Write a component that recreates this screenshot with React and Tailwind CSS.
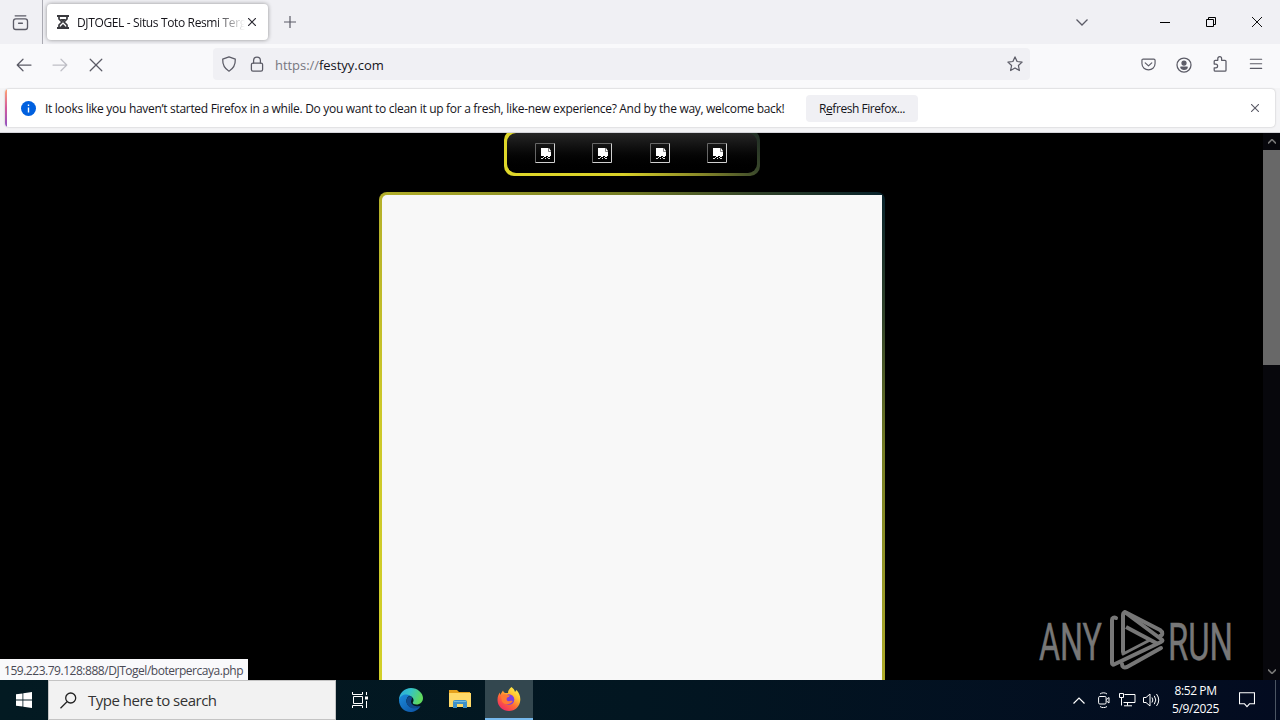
import React from 'react';

const uiFont = 'font-["Open_Sans","Noto_Sans",sans-serif]';

function Icon({ size = 16, children, className = '', width = 1.25 }) {
  return (
    <svg
      width={size}
      height={size}
      viewBox="0 0 16 16"
      fill="none"
      stroke="currentColor"
      strokeWidth={width}
      strokeLinecap="round"
      strokeLinejoin="round"
      className={`block shrink-0 ${className}`}
    >
      {children}
    </svg>
  );
}

function TabStrip() {
  return (
    <div className="flex h-11 bg-[#f0f0f4] text-[#5b5b66]">
      <div className="flex w-[43px] items-center justify-center border-r border-[#aaaab2] pr-[2px]">
        <Icon size={17}>
          <rect x="1.4" y="4.6" width="13.2" height="10" rx="2.2" />
          <path d="M3 1.7h10M6.2 8.7h3.6" />
        </Icon>
      </div>
      <div className="mt-1 ml-[4px] flex h-9 w-[221px] items-center rounded bg-white shadow-[0_0_4px_rgba(0,0,0,0.4)]">
        <svg width="12" height="14" viewBox="0 0 12 14" className="ml-[10px] shrink-0">
          <path d="M0 0h12v2H0zM0 12h12v2H0z" fill="#38383d" />
          <path d="M2 2v2l3 3-3 3v2M10 2v2L7 7l3 3v2" fill="none" stroke="#38383d" strokeWidth="1.7" />
          <path d="M3 4h6L6 7zM3 12l3-3 3 3z" fill="#38383d" />
        </svg>
        <div className="mt-px ml-[8px] w-[168px] shrink-0 overflow-hidden whitespace-nowrap text-[12px] tracking-[-0.36px] text-[#15141a] [mask-image:linear-gradient(to_right,black_82%,transparent)]">
          DJTOGEL - Situs Toto Resmi Terg
        </div>
        <svg width="8" height="8" viewBox="0 0 8 8" className="ml-[3px] shrink-0" stroke="#2b2a33" strokeWidth="1.2">
          <path d="M0 0l8 8M8 0L0 8" />
        </svg>
      </div>
      <svg width="12" height="12" viewBox="0 0 12 12" className="mt-[16px] ml-[16px]" stroke="#5b5b66" strokeWidth="1.2">
        <path d="M6 0v12M0 6h12" />
      </svg>
      <div className="ml-auto flex items-center">
        <svg width="12" height="7" viewBox="0 0 12 7" className="mr-[72px]" fill="none" stroke="#5b5b66" strokeWidth="1.3">
          <path d="M.5.5L6 6 11.5.5" />
        </svg>
        <div className="mr-[36px] h-px w-[10px] bg-black" />
        <svg width="10" height="10" viewBox="0 0 10 10" className="mr-[36px]" fill="none" stroke="#000">
          <path d="M.5 2.5h7v7h-7zM2.5 2.5v-2h7v7h-2" />
        </svg>
        <svg width="10" height="10" viewBox="0 0 10 10" className="mr-[18px]" stroke="#111" strokeWidth="1">
          <path d="M0 0l10 10M10 0L0 10" />
        </svg>
      </div>
    </div>
  );
}

function NavBar() {
  return (
    <div className="flex h-11 items-center bg-[#f9f9fb] pb-[2px] text-[#5b5b66]">
      <Icon className="ml-[16px]">
        <path d="M15 8H1.4M7 2.2L1.2 8 7 13.8" />
      </Icon>
      <Icon className="ml-[20px] text-[#bfbfc6]">
        <path d="M1 8h13.6M9 2.2L14.8 8 9 13.8" />
      </Icon>
      <Icon className="ml-[20px]">
        <path d="M2.2 2.2l11.6 11.6M13.8 2.2L2.2 13.8" />
      </Icon>
      <div className="mb-[2px] ml-[109px] flex h-8 w-[817px] items-center rounded-sm bg-[#f0f0f4]">
        <Icon className="ml-[8px]">
          <path d="M8 .8l6.3 2.3c.2 5.2-1.2 9.2-6.3 12.1C2.9 12.3 1.5 8.3 1.7 3.1z" />
        </Icon>
        <Icon className="ml-[12px]">
          <rect x="2.4" y="7" width="11.2" height="8" rx="1.6" />
          <path d="M4.6 7V4.400a3.400 3.400 0 0 1 6.800 0V7" />
        </Icon>
        <div className="mt-[2px] ml-[10px] text-[13px] leading-4 tracking-[-0.04px] whitespace-nowrap text-[#77777f]">
          https://<span className="text-[#15141a]">festyy.com</span>
        </div>
        <Icon className="mr-[7px] ml-auto">
          <path d="M8 .9l2.100 4.600 5 .6-3.700 3.400 1 5L8 12l-4.400 2.500 1-5L.9 6.100l5-.6z" />
        </Icon>
      </div>
      <Icon size={15} className="mb-[2px] ml-[111px]">
        <path d="M2.300 2.200h11.400a1.300 1.300 0 0 1 1.300 1.300V7c0 9-14 9-14 0V3.500a1.300 1.300 0 0 1 1.300-1.300zM4.500 6.200L8 9.400l3.500-3.200" />
      </Icon>
      <Icon className="mb-px ml-[20px]">
        <circle cx="8" cy="8" r="7" />
        <circle cx="8" cy="6" r="2" fill="currentColor" />
        <path d="M4.800 10h6.400c0 3-6.400 3-6.400 0z" fill="currentColor" />
      </Icon>
      <Icon className="mb-[2px] ml-[20px]">
        <path d="M2.200 8V5.300a1 1 0 0 1 1-1h2.600V2.600a1.900 1.900 0 0 1 3.800 0v1.700H13a1 1 0 0 1 1 1v8.900a1 1 0 0 1-1 1H3.200a1 1 0 0 1-1-1v-2.400h1.500a1.900 1.900 0 0 0 0-3.800z" />
      </Icon>
      <Icon size={14} className="mb-[2px] ml-[21px]">
        <path d="M1.500 2.500h13M1.500 7.800h13M1.500 13h13" />
      </Icon>
    </div>
  );
}

function NotificationBar() {
  return (
    <div className="h-[45px] border-b border-[#d5d5da] bg-[#f4f4f6] px-[5px] pt-px">
      <div className="flex h-[38px] items-center overflow-hidden rounded bg-white shadow-[0_0_2px_rgba(0,0,0,0.25)]">
        <div className="h-full w-[2px] bg-linear-to-b from-[#ffa36c] via-[#d3589d] to-[#8e4fc0]" />
        <svg width="15" height="15" viewBox="0 0 15 15" className="ml-[14px]">
          <circle cx="7.500" cy="7.500" r="7.500" fill="#0060df" />
          <path d="M7.500 6.500v5M7.500 3.400v1.600" stroke="#fff" strokeWidth="1.400" />
        </svg>
        <div className="mt-[2px] ml-[9px] w-[743px] text-[12px] tracking-[-0.3px] whitespace-nowrap text-[#15141a]">
          It looks like you haven’t started Firefox in a while. Do you want to clean it up for a fresh, like-new experience? And by the way, welcome back!
        </div>
        <button className="ml-[18px] h-[27px] w-[112px] rounded bg-[#f0f0f4] pt-px text-[12px] tracking-[-0.45px] whitespace-nowrap text-[#15141a]">
          R<span className="underline">e</span>fresh Firefox...
        </button>
        <svg width="8" height="8" viewBox="0 0 8 8" className="mr-[16px] ml-auto" stroke="#5b5b66" strokeWidth="1.100">
          <path d="M0 0l8 8M8 0L0 8" />
        </svg>
      </div>
    </div>
  );
}

function BrokenImage() {
  return (
    <svg width="20" height="20" viewBox="0 0 20 20" className="block">
      <path d="M.5 19.500V.5h19" fill="none" stroke="#666" />
      <path d="M19.500.5v19H.5" fill="none" stroke="#d0d0d0" />
      <path d="M6 5h8l2 3v5h-1v1h-2v-1h-2v1H9v-1H6z" fill="#fff" />
      <path d="M13.500 5v3.500H16" fill="none" stroke="#666" strokeWidth=".8" />
      <path d="M6 15h2v1H6zM10 15h1v1h-1zM13 15h2v1h-2zM8 14h1v1H8zM12 14h1v1h-1z" fill="#ddd" />
    </svg>
  );
}

function AnyRunLogo() {
  return (
    <svg width="200" height="64" viewBox="0 0 200 64" className="absolute top-[476px] left-[1038px]">
      <g fill="#777" stroke="#777" strokeWidth=".5" fontFamily="Roboto, sans-serif" fontSize="52.500">
        <text x="1" y="51" textLength="63" lengthAdjust="spacingAndGlyphs">ANY</text>
        <text x="130" y="51" textLength="65" lengthAdjust="spacingAndGlyphs">RUN</text>
      </g>
      <g fill="none" stroke="#777" strokeWidth="4" strokeLinejoin="round" strokeLinecap="round">
        <path d="M78 9c-2-1-4 0-4 2v43c0 2 1 2 3 1l46-22c2-1 2-2 0-3L88 4c-2-1-3 0-3 2v37" />
        <path d="M88 18l32 17" strokeLinecap="butt" />
        <path d="M87 3l35 18c3 2 3 5 0 6" />
        <path d="M84 55c0 3 2 4 5 3l34-19" />
        <path d="M85 45l27-14" strokeWidth="3" />
      </g>
    </svg>
  );
}

function PageContent() {
  return (
    <div className="relative flex h-[547px] overflow-hidden bg-black">
      <div className="flex w-[1263px] flex-col items-center">
        <div className="-mt-[3px] h-[46px] w-[256px] shrink-0 rounded-[10px] bg-[linear-gradient(45deg,#e0d82a,#d8d028_40%,#8a8a28_65%,#3c4a2c_85%,#1c2a24)] p-[3px]">
          <div className="flex h-full items-center justify-between rounded-[9px] bg-linear-to-b from-[#262626] to-black pr-[29px] pl-[28px]">
            <BrokenImage />
            <BrokenImage />
            <BrokenImage />
            <BrokenImage />
          </div>
        </div>
        <div className="mt-[16px] h-[800px] w-[506px] shrink-0 rounded-[8px] bg-[linear-gradient(45deg,#d8d828,#ccc82a_45%,#b4b02a_61%,#747c24_80%,#32442a_90%,#06202a)] p-[3px]">
          <div className="h-full rounded-tl-[5px] bg-[#f8f8f8]" />
        </div>
      </div>
      <div className="flex w-[17px] flex-col bg-[#07070c]">
        <div className="flex h-[17px] items-center justify-center text-[#777]">
          <svg width="8" height="5" viewBox="0 0 8 5" fill="none" stroke="currentColor" strokeWidth="1.600">
            <path d="M0 4.500l4-4 4 4" />
          </svg>
        </div>
        <div className="h-[215px] bg-[#686868]" />
        <div className="mt-auto flex h-[17px] items-center justify-center text-[#777]">
          <svg width="8" height="5" viewBox="0 0 8 5" fill="none" stroke="currentColor" strokeWidth="1.600">
            <path d="M0 .5l4 4 4-4" />
          </svg>
        </div>
      </div>
      <AnyRunLogo />
      <div className="absolute bottom-0 left-0 flex h-[21px] w-[248px] items-center bg-[#f9f9fb] pt-[2px] pl-1 text-[12px] tracking-[-0.47px] whitespace-nowrap text-[#4a4a55]">
        159.223.79.128:888/DJTogel/boterpercaya.php
      </div>
    </div>
  );
}

function EdgeIcon() {
  return (
    <svg width="24" height="24" viewBox="0 0 24 24">
      <defs>
        <linearGradient id="edgeTop" x1="0" x2="1" y1="0" y2=".3">
          <stop offset="0" stopColor="#2aa6e0" />
          <stop offset=".5" stopColor="#35c3c7" />
          <stop offset="1" stopColor="#5fd95e" />
        </linearGradient>
        <linearGradient id="edgeLow" x1="0" x2="1" y1="0" y2="1">
          <stop offset="0" stopColor="#1b8bdc" />
          <stop offset="1" stopColor="#0c4fa0" />
        </linearGradient>
      </defs>
      <path d="M0 12C0 5 5.500 0 12 0s12 5 12 10c0 4-3 6.500-6.500 6.500-2.500 0-4-1-3.700-2 1.400-1.500 1-5-2.300-6.500C7 6 2 8 0 12z" fill="url(#edgeTop)" />
      <path d="M0 12c1-5 7-7 11-4.500C7.500 9 6.500 13 8.500 16.500c2.500 4 8.500 4.500 13 1.500C19.500 22 15 24 11.500 24 5 24 0 18.500 0 12z" fill="url(#edgeLow)" />
      <path d="M11 8c-4 1.500-4.500 6-2 9.500 3 4 9 3.500 12.500.5-4 1-9-.5-9.500-4 0-2 1-3 1-4 0-.8-.8-1.600-2-2z" fill="#104a8c" />
    </svg>
  );
}

function FolderIcon() {
  return (
    <svg width="22" height="20" viewBox="0 0 22 20">
      <path d="M0 1h8l2 2h11v4H0z" fill="#e5a11d" />
      <path d="M0 4h22v14H0z" fill="#ffd968" />
      <path d="M4 19v-6q0-2 2-2h10q2 0 2 2v6h-4v-4H8v4z" fill="#3f91c9" />
      <path d="M5 12h12v1H5z" fill="#74bbe0" />
    </svg>
  );
}

function FirefoxIcon() {
  return (
    <svg width="24" height="24" viewBox="0 0 24 24">
      <defs>
        <linearGradient id="fxBody" x1=".85" x2=".2" y1=".05" y2="1">
          <stop offset="0" stopColor="#fff24a" />
          <stop offset=".3" stopColor="#ffc030" />
          <stop offset=".6" stopColor="#ff6a35" />
          <stop offset="1" stopColor="#ef246c" />
        </linearGradient>
      </defs>
      <path d="M14.500 0c2 1.500 3 3 3.500 5l1.500-2c2.500 2.500 4 6 3.800 10C23 19.500 18 24 12 24S.5 19.500.5 13c0-3.500 1.200-6 2.500-7.500V8l3-4.500c.3 1.200 1 2 2 2.500h3c0-2.500 1.500-4.500 3.500-6z" fill="url(#fxBody)" />
      <circle cx="12" cy="12.500" r="5.300" fill="#7a3fe0" />
      <path d="M4 9c2-2 4.500-2 6-1l3 .6c-.4 1.300-2 1.800-3 2.200-1.300 2.300.7 4 2.800 3.200 2-.6 3 0 3 0-2 4-9 4.500-11 0z" fill="#ff7a34" />
    </svg>
  );
}

function Taskbar() {
  return (
    <div className="flex h-10 bg-linear-to-r from-[#031a22] via-[#021621] to-[#030b20] text-white">
      <div className="flex w-12 items-center justify-center">
        <svg width="16" height="16" viewBox="0 0 16 16" fill="#fff">
          <path d="M0 2.300l6.500-.9v6.100H0zM7.300 1.300L16 0v7.500H7.300zM0 8.400h6.500v6.200L0 13.700zM7.300 8.400H16V16l-8.700-1.300z" />
        </svg>
      </div>
      <div className="flex w-[288px] items-center border border-[#c4c4c4] bg-[#f2f2f2] text-[#333]">
        <svg width="17" height="17" viewBox="0 0 17 17" className="ml-[11px]" fill="none" stroke="#222" strokeWidth="1.300">
          <circle cx="10.700" cy="6" r="5" />
          <path d="M7 9.700L.5 16.200" />
        </svg>
        <div className="mt-px ml-[11px] text-[15px] tracking-[-0.5px] whitespace-nowrap">Type here to search</div>
      </div>
      <div className="flex w-[49px] items-center justify-center">
        <svg width="17" height="16" viewBox="0 0 17 16" fill="none" stroke="#fff">
          <path d="M.5 0v2.500h10V0M.5 16v-2.500h10V16M1.500 4.500h9v7h-9zM14.500 0v3M14.500 9v7" />
          <path d="M13 4.500h3v3h-3z" fill="#fff" stroke="none" />
        </svg>
      </div>
      <div className="flex w-[52px] items-center justify-center">
        <EdgeIcon />
      </div>
      <div className="flex w-[48px] items-center justify-center pr-[2px] pb-[2px]">
        <FolderIcon />
      </div>
      <div className="flex w-12 items-center justify-center border-b-2 border-[#76b9ed] bg-[#33474f]">
        <FirefoxIcon />
      </div>
      <div className="ml-auto flex items-center">
        <svg width="12" height="7" viewBox="0 0 12 7" fill="none" stroke="#fff" strokeWidth="1.200">
          <path d="M.5 6.500L6 1l5.500 5.500" />
        </svg>
        <svg width="12" height="16" viewBox="0 0 12 16" className="ml-[13px]" fill="none" stroke="#fff">
          <rect x=".6" y="4.500" width="7.500" height="7.500" rx="1.200" />
          <path d="M8.500 7.500l2.500-2v5.500l-2.500-2M2 2c2-1.600 5-1.600 7 0M2 14.500c2 1.500 5 1.500 7 0" />
        </svg>
        <svg width="17" height="14" viewBox="0 0 17 14" className="ml-[9px]" fill="none" stroke="#fff">
          <path d="M5.500 1.500h10.500v8H4.500M8.500 9.500v3M5 12.800h8M.5.500h4v4h-4zM2.500 4.500v8" />
        </svg>
        <svg width="17" height="14" viewBox="0 0 17 14" className="ml-[7px]" fill="none" stroke="#fff">
          <path d="M.5 4.500h2.500l4-3.500v12l-4-3.500H.5zM9 4.500q1.700 2.500 0 5M11.300 2.800q3 4.200 0 8.400M13.500 1q4.500 6 0 12" />
        </svg>
        <div className="ml-[12px] w-[47px] text-center text-[12px] leading-[18px] tracking-[-0.4px] whitespace-nowrap">
          <div>8:52 PM</div>
          <div>5/9/2025</div>
        </div>
        <svg width="16" height="16" viewBox="0 0 16 16" className="ml-[20px]" fill="none" stroke="#fff" strokeWidth="1.100">
          <path d="M.5.800h15v11h-5L8 14.600l-2.500-2.800h-5z" />
        </svg>
        <div className="mr-[4px] ml-[20px] h-10 w-px bg-[#4b5563]" />
      </div>
    </div>
  );
}

export default function App() {
  return (
    <div className={`h-[720px] w-[1280px] overflow-hidden ${uiFont}`}>
      <TabStrip />
      <NavBar />
      <NotificationBar />
      <PageContent />
      <Taskbar />
    </div>
  );
}
